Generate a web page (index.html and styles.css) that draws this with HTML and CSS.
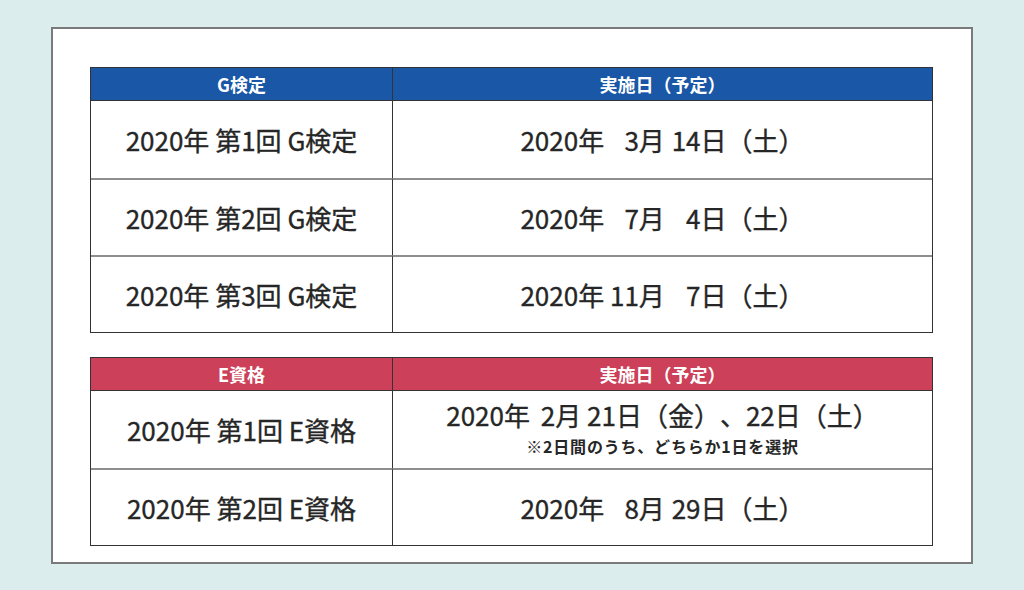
FILE: index.html
```html
<!DOCTYPE html>
<html lang="ja">
<head>
<meta charset="utf-8">
<title>G検定・E資格 日程</title>
<link rel="stylesheet" href="styles.css">
</head>
<body>
<div class="panel">
  <section class="sched sched-g">
    <div class="hd">G検定</div>
    <div class="hd hd-r">実施日（予定）</div>
    <div class="c">2020年 第1回 G検定</div>
    <div class="c c-r"><span class="dt">2020年 <span class="n">3</span>月 <span class="n d">14</span>日（土）</span></div>
    <div class="c">2020年 第2回 G検定</div>
    <div class="c c-r"><span class="dt">2020年 <span class="n">7</span>月 <span class="n d">4</span>日（土）</span></div>
    <div class="c">2020年 第3回 G検定</div>
    <div class="c c-r"><span class="dt">2020年 <span class="n">11</span>月 <span class="n d">7</span>日（土）</span></div>
  </section>
  <section class="sched sched-e">
    <div class="hd">E資格</div>
    <div class="hd hd-r">実施日（予定）</div>
    <div class="c">2020年 第1回 E資格</div>
    <div class="c c-r c-col">
      <span class="dt">2020年 <span class="w">2</span>月 21日（金）、22日（土）</span>
      <span class="note">※2日間のうち、どちらか1日を選択</span>
    </div>
    <div class="c">2020年 第2回 E資格</div>
    <div class="c c-r"><span class="dt">2020年 <span class="n">8</span>月 <span class="n d">29</span>日（土）</span></div>
  </section>
</div>
</body>
</html>
```

FILE: styles.css
```css
* { box-sizing: border-box; }
html, body { margin: 0; padding: 0; }
body {
  background: #dbeeed;
  font-family: "Noto Sans CJK JP", "Noto Sans", sans-serif;
  color: #262626;
  width: 1024px;
  height: 590px;
  padding: 27px 0 0 51px;
  text-spacing-trim: space-all;
}
.panel {
  width: 922px;
  height: 537px;
  background: #fff;
  border: 2px solid #7a7a7a;
  padding: 38px 38px 0 37px;
  display: flex;
  flex-direction: column;
  gap: 24px;
}
.sched {
  display: grid;
  grid-template-columns: 301px 1fr;
  border: 1px solid #333;
}
.hd {
  height: 33px;
  color: #fff;
  font-weight: 700;
  font-size: 18px;
  display: flex;
  align-items: center;
  justify-content: center;
  border-bottom: 1px solid #333;
  padding-bottom: 1px;
}
.sched-g .hd { background: #1a57a6; }
.sched-e .hd { background: #cc4159; }
.hd-r, .c-r { border-left: 1px solid #333; }
.c {
  height: 77px;
  display: flex;
  align-items: center;
  justify-content: center;
  font-size: 26px;
  font-weight: 400;
  border-top: 2px solid #8e8e8e;
  white-space: pre;
  -webkit-text-stroke: 0.35px #262626;
}
.hd + .hd + .c, .hd + .hd + .c + .c { border-top: none; }
.n { display: inline-block; width: 2ch; text-align: right; }
.n.d { margin-left: 1px; }
.w { margin-left: 5px; }
.c-col {
  flex-direction: column;
  justify-content: flex-start;
  padding-top: 9px;
  gap: 6px;
}
.c-col .dt { line-height: 30px; }
.note {
  font-size: 16px;
  font-weight: 700;
  line-height: 20px;
  letter-spacing: 0.8px;
  -webkit-text-stroke: 0;
}
```
